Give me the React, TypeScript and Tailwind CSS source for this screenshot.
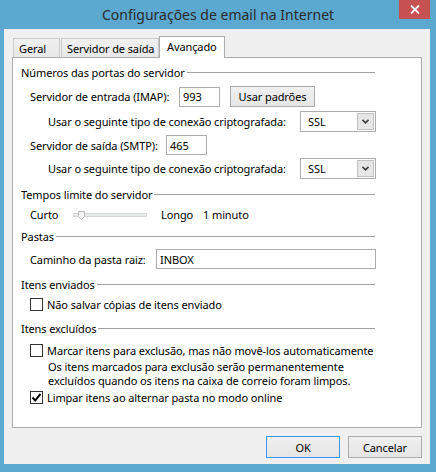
import React from "react";

function Header({ text, className = "" }: { text: string; className?: string }) {
  return (
    <div className={`flex items-center h-[15px] w-[354px] ${className}`}>
      <span className="leading-[15px] whitespace-nowrap">{text}</span>
      <div className="flex-1 h-px bg-[#a0a0a0] ml-[2px]" />
    </div>
  );
}

function Select({ value }: { value: string }) {
  return (
    <div className="ml-auto w-[76px] h-[21px] border border-[#acacac] bg-white flex items-center">
      <span className="flex-1 pl-[7px] leading-[15px]">{value}</span>
      <div className="w-[17px] h-[17px] mr-[1px] bg-[#e6e6e6] border border-[#c2c2c2] flex items-center justify-center">
        <svg width="7" height="5" viewBox="0 0 7 5">
          <path d="M0.5 0.8 L3.5 3.8 L6.5 0.8" fill="none" stroke="#3c3c3c" strokeWidth="1.6" />
        </svg>
      </div>
    </div>
  );
}

function Checkbox({ checked }: { checked?: boolean }) {
  return (
    <div className="w-[13px] h-[13px] border border-[#333333] bg-white flex items-center justify-center shrink-0">
      {checked && (
        <svg width="11" height="11" viewBox="0 0 11 11">
          <path d="M1.5 5.5 L4.2 8.5 L9.5 1.8" fill="none" stroke="#000" strokeWidth="2" />
        </svg>
      )}
    </div>
  );
}

function Btn({ label, focused }: { label: string; focused?: boolean }) {
  return (
    <div
      className={`w-[74px] h-[22px] flex items-center justify-center border bg-gradient-to-b from-[#f0f0f0] to-[#e5e5e5] leading-[15px] ${
        focused ? "border-[#3399ff]" : "border-[#acacac]"
      }`}
    >
      {label}
    </div>
  );
}

export default function App() {
  return (
    <div className="w-[436px] h-[472px] bg-[#5ba8d0] flex flex-col font-['Noto_Sans',sans-serif] text-[11px] tracking-[-0.1px] text-black overflow-hidden">
      {/* Title bar */}
      <div className="h-[29px] grid grid-cols-[1fr_auto_1fr] items-start">
        <div />
        <div className="pt-[5px] text-[14px] tracking-normal leading-[19px] text-[#2b2b2b] whitespace-nowrap">
          Configurações de email na Internet
        </div>
        <div className="flex justify-end pr-[6px]">
          <div className="w-[31px] h-[19px] bg-[#c75050] flex items-center justify-center">
            <svg width="10" height="9" viewBox="0 0 10 9">
              <path d="M1 0.5 L9 8.5 M9 0.5 L1 8.5" stroke="#ffffff" strokeWidth="1.8" />
            </svg>
          </div>
        </div>
      </div>

      {/* Client area */}
      <div className="ml-[4px] w-[426px] h-[435px] bg-[#f0f0f0] px-[8px] flex flex-col">
        {/* Tabs */}
        <div className="mt-[7px] h-[21px] flex items-end pl-[1px]">
          <div className="w-[47px] h-[19px] border border-b-0 border-[#c9c9c9] bg-gradient-to-b from-[#f0f0f0] to-[#e8e8e8] pl-[5px] flex items-center leading-[15px]">
            Geral
          </div>
          <div className="ml-[1px] w-[98px] h-[19px] border border-b-0 border-[#c9c9c9] bg-gradient-to-b from-[#f0f0f0] to-[#e8e8e8] pl-[5px] flex items-center leading-[15px] whitespace-nowrap">
            Servidor de saída
          </div>
          <div className="relative z-10 -mb-px w-[66px] h-[22px] border border-b-0 border-[#acacac] bg-white pl-[7px] pb-[2px] flex items-center leading-[15px]">
            Avançado
          </div>
        </div>

        {/* Panel */}
        <div className="h-[371px] border border-[#acacac] bg-white pl-[8px] flex flex-col">
          <Header text="Números das portas do servidor" className="mt-[7px]" />

          <div className="mt-[6px] h-[21px] flex items-center pl-[9px]">
            <span className="w-[149px] leading-[15px] whitespace-nowrap">Servidor de entrada (IMAP):</span>
            <div className="w-[41px] h-[20px] border border-[#acacac] bg-white pl-[3px] flex items-center leading-[15px]">993</div>
            <div className="ml-[10px] w-[85px] h-[21px] border border-[#acacac] bg-gradient-to-b from-[#f0f0f0] to-[#e5e5e5] flex items-center justify-center leading-[15px] whitespace-nowrap">
              Usar padrões
            </div>
          </div>

          <div className="mt-[4px] h-[21px] w-[355px] flex items-center pl-[27px]">
            <span className="leading-[15px] whitespace-nowrap">Usar o seguinte tipo de conexão criptografada:</span>
            <Select value="SSL" />
          </div>

          <div className="mt-[3px] h-[20px] flex items-center pl-[9px]">
            <span className="w-[136px] leading-[15px] whitespace-nowrap">Servidor de saída (SMTP):</span>
            <div className="w-[41px] h-[20px] border border-[#acacac] bg-white pl-[3px] flex items-center leading-[15px]">465</div>
          </div>

          <div className="mt-[3px] h-[21px] w-[355px] flex items-center pl-[27px]">
            <span className="leading-[15px] whitespace-nowrap">Usar o seguinte tipo de conexão criptografada:</span>
            <Select value="SSL" />
          </div>

          <Header text="Tempos limite do servidor" className="mt-[8px]" />

          <div className="mt-[5px] h-[15px] flex items-center pl-[9px]">
            <span className="w-[43px] leading-[15px]">Curto</span>
            <div className="relative w-[74px] h-[4px] bg-[#e7eaea] border border-[#d6d6d6]">
              <svg className="absolute left-[4px] -top-[3px]" width="7" height="9" viewBox="0 0 7 9">
                <path d="M0.5 0.5 H6.5 V5.5 L3.5 8.5 L0.5 5.5 Z" fill="#f4f4f4" stroke="#bcbcbc" strokeWidth="1" />
              </svg>
            </div>
            <span className="ml-[14px] w-[42px] leading-[15px]">Longo</span>
            <span className="leading-[15px]">1 minuto</span>
          </div>

          <Header text="Pastas" className="mt-[7px]" />

          <div className="mt-[5px] h-[20px] flex items-center pl-[9px]">
            <span className="w-[126px] leading-[15px] whitespace-nowrap">Caminho da pasta raiz:</span>
            <div className="w-[220px] h-[20px] border border-[#acacac] bg-white pl-[3px] flex items-center leading-[15px]">INBOX</div>
          </div>

          <Header text="Itens enviados" className="mt-[8px]" />

          <div className="mt-[5px] h-[15px] flex items-center pl-[9px] gap-[4px]">
            <Checkbox />
            <span className="leading-[15px] whitespace-nowrap">Não salvar cópias de itens enviado</span>
          </div>

          <Header text="Itens excluídos" className="mt-[9px]" />

          <div className="mt-[7px] h-[15px] flex items-center pl-[9px] gap-[4px]">
            <Checkbox />
            <span className="leading-[15px] whitespace-nowrap">Marcar itens para exclusão, mas não movê-los automaticamente</span>
          </div>

          <div className="mt-[2px] pl-[27px] leading-[14px] whitespace-nowrap">
            <div>Os itens marcados para exclusão serão permanentemente</div>
            <div>excluídos quando os itens na caixa de correio foram limpos.</div>
          </div>

          <div className="mt-[2px] h-[15px] flex items-center pl-[9px] gap-[4px]">
            <Checkbox checked />
            <span className="leading-[15px] whitespace-nowrap">Limpar itens ao alternar pasta no modo online</span>
          </div>
        </div>

        {/* Buttons */}
        <div className="mt-[8px] flex justify-end gap-[8px]">
          <Btn label="OK" focused />
          <Btn label="Cancelar" />
        </div>
      </div>
    </div>
  );
}
